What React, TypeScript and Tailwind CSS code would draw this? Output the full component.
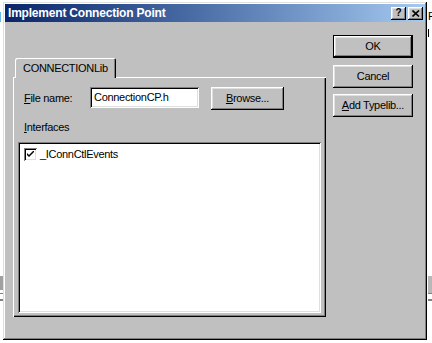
const RAISED =
  "shadow-[inset_-1px_-1px_#000,inset_1px_1px_#fff,inset_-2px_-2px_#808080,inset_2px_2px_#dfdfdf]";
const SUNKEN =
  "shadow-[inset_1px_1px_#808080,inset_-1px_-1px_#fff,inset_2px_2px_#000,inset_-2px_-2px_#dfdfdf]";

function Button({ children, isDefault = false, className = "" }: { children: React.ReactNode; isDefault?: boolean; className?: string }) {
  return (
    <div
      className={`flex items-center justify-center bg-[#c0c0c0] ${
        isDefault ? "border border-black" : ""
      } ${className}`}
    >
      <div className={`flex h-full w-full items-center justify-center ${RAISED}`}>{children}</div>
    </div>
  );
}

export default function App() {
  return (
    <div className="relative h-[343px] w-[432px] overflow-hidden bg-white pl-[3px] pt-[2px] font-['Liberation_Sans',Arial,sans-serif] text-[11px] leading-none tracking-[-0.3px] text-black">
      {/* bits of windows behind the dialog */}
      <span className="absolute left-[-2px] top-[11px] text-[11px]">]</span>
      <span className="absolute left-[428px] top-[11px] text-[11px]">R</span>
      <span className="absolute left-[428px] top-[29px] h-[8px] w-px bg-black" />
      <span className="absolute left-0 top-[276px] h-[14px] w-[3px] bg-[#a0a0a0]" />
      <span className="absolute left-0 top-[293px] h-px w-[3px] bg-[#808080]" />
      <span className="absolute left-0 top-[299px] h-[2px] w-[3px] bg-[#808080]" />
      <span className="absolute left-[428px] top-[276px] h-[17px] w-[4px] bg-[#b8b8b8]" />
      <span className="absolute left-[428px] top-[293px] h-px w-[4px] bg-[#808080]" />
      <span className="absolute left-[428px] top-[299px] h-[2px] w-[4px] bg-[#808080]" />

      {/* dialog */}
      <div className="relative flex h-[338px] w-[424px] flex-col bg-[#c0c0c0] p-[2px] shadow-[inset_-1px_-1px_#000,inset_1px_1px_#dfdfdf,inset_-2px_-2px_#808080,inset_2px_2px_#fff]">
        {/* title bar */}
        <div className="flex h-[18px] items-center bg-gradient-to-r from-[#0a246a] to-[#a6caf0] pl-[3px] pr-[2px]">
          <span className="flex-1 text-[12px] font-bold tracking-[-0.2px] text-white">Implement Connection Point</span>
          <div className="flex gap-[1px]">
            <div className={`flex h-[13px] w-[15px] items-center justify-center bg-[#c0c0c0] ${RAISED}`}>
              <span className="text-[10px] font-bold tracking-normal">?</span>
            </div>
            <div className={`ml-px flex h-[13px] w-[15px] items-center justify-center bg-[#c0c0c0] ${RAISED}`}>
              <svg width="8" height="7" viewBox="0 0 8 7">
                <path d="M0.5 0.5 L7 6.5 M7 0.5 L0.5 6.5" stroke="#000" strokeWidth="1.6" />
              </svg>
            </div>
          </div>
        </div>

        {/* body */}
        <div className="flex pl-[8px]">
          {/* tab control */}
          <div className="mt-[36px] w-[313px]">
            <div className="relative z-10 -mb-px ml-[2px] flex h-[20px] w-[101px] items-center rounded-t-[2px] bg-[#c0c0c0] pl-[8px] shadow-[inset_1px_1px_#fff,inset_-1px_0_#000,inset_-2px_0_#808080]">
              CONNECTIONLib
            </div>
            <div className="flex h-[240px] flex-col px-[5px] pt-[10px] shadow-[inset_1px_1px_#fff,inset_-1px_-1px_#000,inset_-2px_-2px_#808080]">
              <div className="flex h-[23px] items-center pl-[6px]">
                <span className="w-[66px]">
                  <u>F</u>ile name:
                </span>
                <div className={`flex h-[21px] w-[109px] items-center self-start bg-white pl-[4px] ${SUNKEN}`}>
                  ConnectionCP.h
                </div>
                <Button className="ml-[12px] h-[23px] w-[73px]">
                  <span>
                    <u>B</u>rowse...
                  </span>
                </Button>
              </div>
              <div className="mt-[12px] h-[11px] pl-[6px]">
                <u>I</u>nterfaces
              </div>
              <div className={`mt-[9px] h-[171px] bg-white pl-[6px] pt-[6px] ${SUNKEN}`}>
                <div className="flex items-center">
                  <div className="flex h-[13px] w-[13px] items-center justify-center bg-white shadow-[inset_1px_1px_#808080,inset_-1px_-1px_#fff,inset_2px_2px_#000,inset_-2px_-2px_#dfdfdf]">
                    <svg width="7" height="7" viewBox="0 0 7 7">
                      <path d="M0 2 L0 4 L2 6 L7 1 L7 -1 L2 4 Z" fill="#000" />
                    </svg>
                  </div>
                  <span className="ml-[3px]">_IConnCtlEvents</span>
                </div>
              </div>
            </div>
          </div>

          {/* dialog buttons */}
          <div className="ml-[7px] flex flex-col">
            <Button isDefault className="mt-[13px] h-[23px] w-[80px]">
              OK
            </Button>
            <Button className="mt-[7px] h-[23px] w-[80px]">Cancel</Button>
            <Button className="mt-[6px] h-[23px] w-[80px]">
              <span>
                <u>A</u>dd Typelib...
              </span>
            </Button>
          </div>
        </div>
      </div>
    </div>
  );
}
